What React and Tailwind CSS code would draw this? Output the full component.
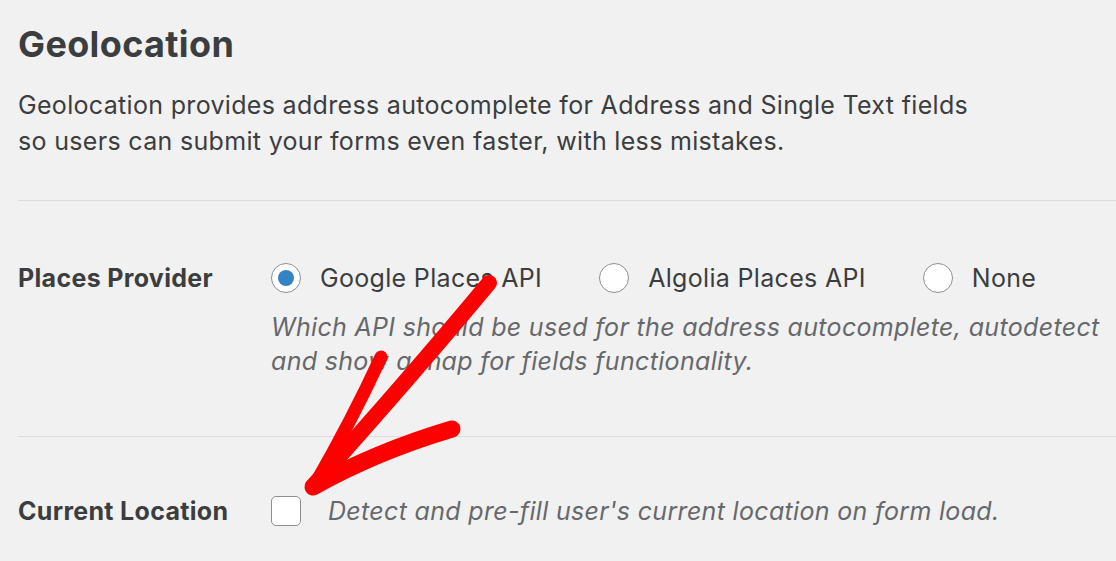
import React from 'react';

const Radio = ({ checked, label }) => (
    <label className="flex items-center gap-[19px] mr-[57px]">
        <span className="w-[30px] h-[30px] rounded-full bg-white border-[1.5px] border-[#8c8f94] flex items-center justify-center shrink-0">
            {checked && <span className="w-[16px] h-[16px] rounded-full bg-[#3582c4]" />}
        </span>
        <span>{label}</span>
    </label>
);

const Arrow = () => (
    <svg className="absolute top-0 left-0 pointer-events-none" width="1116" height="561" viewBox="0 0 1116 561">
        <g fill="none" stroke="#ff0000" strokeLinecap="round" strokeLinejoin="round">
            <path d="M489 283 Q 410 378 313 486" strokeWidth="16" />
            <path d="M381 357 Q 352 420 314 486" strokeWidth="13" />
            <path d="M313 487 Q 375 452 452 429" strokeWidth="17" />
        </g>
    </svg>
);

const App = () => {
    return (
        <div className="relative min-h-screen overflow-hidden bg-[#f1f1f1] pl-[18px] pt-[20px] text-[#3c3d3f] font-['Inter',sans-serif] tracking-[0.02em]">
            {/* Header */}
            <h1 className="text-[36px] font-bold leading-[48px] tracking-[0.01em]">Geolocation</h1>
            <p className="mt-[19px] text-[25px] leading-[36px]">
                Geolocation provides address autocomplete for Address and Single Text fields
                <br />
                so users can submit your forms even faster, with less mistakes.
            </p>

            <div className="mt-[41px] border-t border-[#dcdcde]" />

            {/* Places Provider */}
            <div className="flex pt-[59px] pb-[58px] text-[25px]">
                <div className="w-[253px] shrink-0 font-bold leading-[36px]">Places Provider</div>
                <div>
                    <div className="flex leading-[36px]">
                        <Radio checked label="Google Places API" />
                        <Radio label="Algolia Places API" />
                        <Radio label="None" />
                    </div>
                    <p className="mt-[14px] italic text-[#66686b] leading-[34px] whitespace-nowrap">
                        Which API should be used for the address autocomplete, autodetect
                        <br />
                        and show a map for fields functionality.
                    </p>
                </div>
            </div>

            <div className="border-t border-[#dcdcde]" />

            {/* Current Location */}
            <div className="flex pt-[56px] text-[25px] leading-[36px]">
                <div className="w-[253px] shrink-0 font-bold">Current Location</div>
                <div className="flex items-center gap-[27px]">
                    <span className="w-[30px] h-[30px] rounded-[5px] bg-white border-[1.5px] border-[#8c8f94] shrink-0" />
                    <span className="italic text-[#66686b]">Detect and pre-fill user's current location on form load.</span>
                </div>
            </div>

            <Arrow />
        </div>
    );
};

export default App;
